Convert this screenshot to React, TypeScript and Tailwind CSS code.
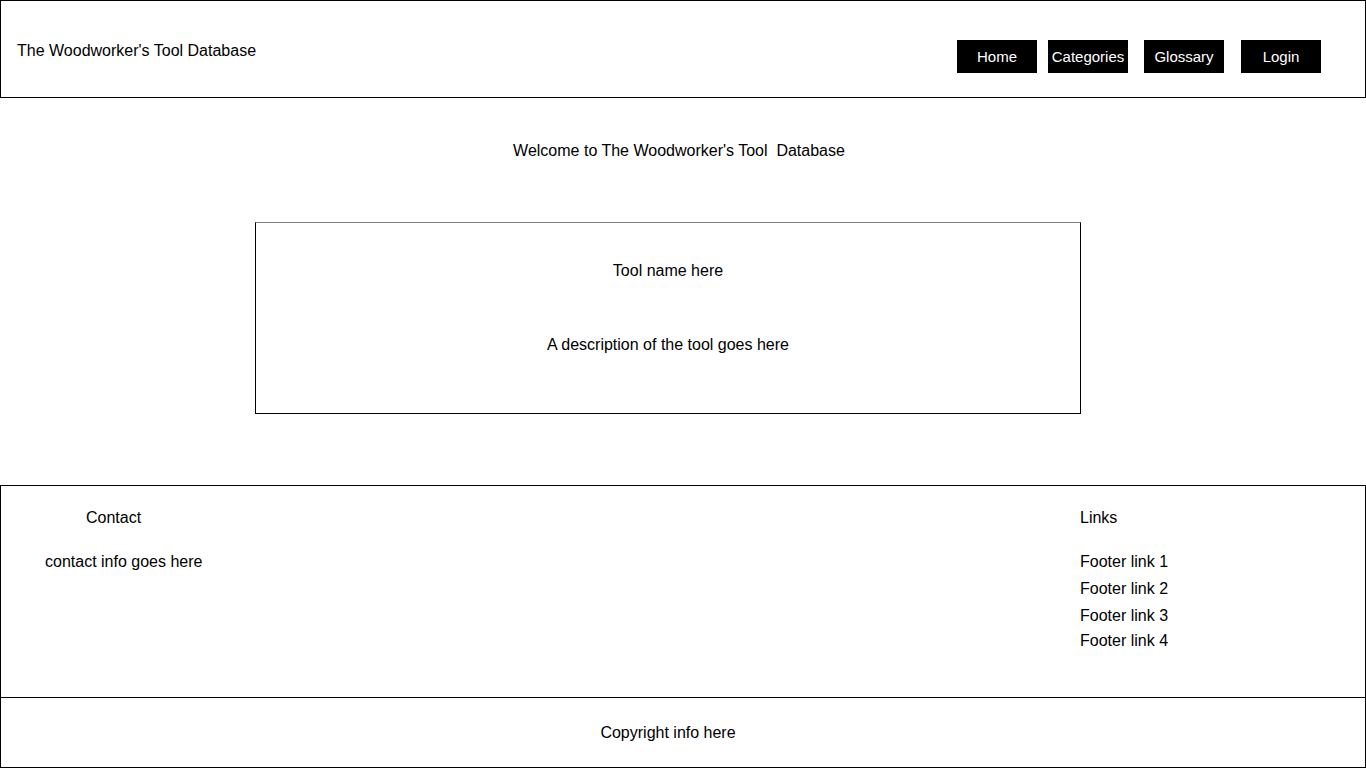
import React from 'react';

const navItems = [
  { label: 'Home', margin: '' },
  { label: 'Categories', margin: 'ml-[11px]' },
  { label: 'Glossary', margin: 'ml-[16px]' },
  { label: 'Login', margin: 'ml-[17px]' },
];

const App = () => {
  return (
    <div className="w-[1366px] h-[768px] bg-white text-black text-[16px] leading-[18px] font-['Liberation_Sans',Arial,sans-serif] overflow-hidden">
      {/* Header */}
      <header className="h-[98px] border border-black flex justify-between">
        <div className="pl-[16px] pt-[41px]">The Woodworker's Tool Database</div>
        <nav className="flex items-start pt-[39px] pr-[44px]">
          {navItems.map((item) => (
            <a
              key={item.label}
              className={`${item.margin} w-[80px] h-[33px] bg-black text-white text-[15px] flex items-center justify-center`}
            >
              {item.label}
            </a>
          ))}
        </nav>
      </header>

      {/* Main content */}
      <main className="h-[387px] flex flex-col">
        <h1 className="pt-[44px] pr-[8px] text-center whitespace-pre">Welcome to The Woodworker's Tool  Database</h1>
        <div className="mt-[62px] ml-[255px] w-[826px] h-[192px] border border-black border-t-[#7f7f7f] flex flex-col items-center">
          <div className="pt-[39px]">Tool name here</div>
          <div className="mt-[56px]">A description of the tool goes here</div>
        </div>
      </main>

      {/* Footer */}
      <footer className="h-[212px] border-t border-x border-black flex justify-between">
        <div className="pt-[23px]">
          <div className="pl-[85px]">Contact</div>
          <div className="pl-[44px] mt-[26px]">contact info goes here</div>
        </div>
        <div className="pt-[23px] w-[285px]">
          <div>Links</div>
          <ul className="mt-[26px]">
            <li>Footer link 1</li>
            <li className="mt-[9px]">Footer link 2</li>
            <li className="mt-[9px]">Footer link 3</li>
            <li className="mt-[7px]">Footer link 4</li>
          </ul>
        </div>
      </footer>
      <div className="h-[71px] border border-black flex items-center justify-center pr-[30px]">
        Copyright info here
      </div>
    </div>
  );
};

export default App;
